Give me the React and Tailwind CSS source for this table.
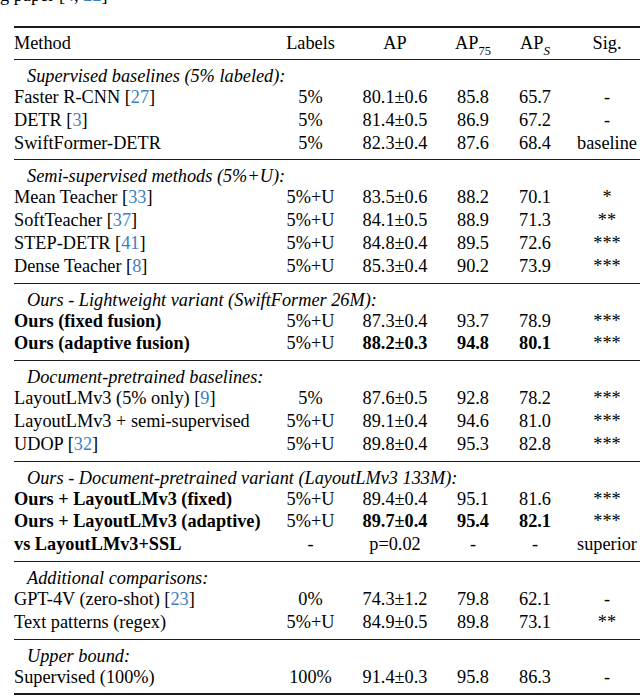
import React from "react";

const C = ({ n }) => (
  <>
    {" "}[<span className="text-[#3d7fc1]">{n}</span>]
  </>
);

const sections = [
  {
    label: "Supervised baselines (5% labeled):",
    rows: [
      { m: "Faster R-CNN", c: "27", l: "5%", ap: "80.1±0.6", a75: "85.8", as: "65.7", s: "-" },
      { m: "DETR", c: "3", l: "5%", ap: "81.4±0.5", a75: "86.9", as: "67.2", s: "-" },
      { m: "SwiftFormer-DETR", l: "5%", ap: "82.3±0.4", a75: "87.6", as: "68.4", s: "baseline" },
    ],
  },
  {
    label: "Semi-supervised methods (5%+U):",
    rows: [
      { m: "Mean Teacher", c: "33", l: "5%+U", ap: "83.5±0.6", a75: "88.2", as: "70.1", s: "*" },
      { m: "SoftTeacher", c: "37", l: "5%+U", ap: "84.1±0.5", a75: "88.9", as: "71.3", s: "**" },
      { m: "STEP-DETR", c: "41", l: "5%+U", ap: "84.8±0.4", a75: "89.5", as: "72.6", s: "***" },
      { m: "Dense Teacher", c: "8", l: "5%+U", ap: "85.3±0.4", a75: "90.2", as: "73.9", s: "***" },
    ],
  },
  {
    label: "Ours - Lightweight variant (SwiftFormer 26M):",
    rows: [
      { m: "Ours (fixed fusion)", mb: true, l: "5%+U", ap: "87.3±0.4", a75: "93.7", as: "78.9", s: "***" },
      { m: "Ours (adaptive fusion)", mb: true, l: "5%+U", ap: "88.2±0.3", a75: "94.8", as: "80.1", s: "***", vb: true },
    ],
  },
  {
    label: "Document-pretrained baselines:",
    rows: [
      { m: "LayoutLMv3 (5% only)", c: "9", l: "5%", ap: "87.6±0.5", a75: "92.8", as: "78.2", s: "***" },
      { m: "LayoutLMv3 + semi-supervised", l: "5%+U", ap: "89.1±0.4", a75: "94.6", as: "81.0", s: "***" },
      { m: "UDOP", c: "32", l: "5%+U", ap: "89.8±0.4", a75: "95.3", as: "82.8", s: "***" },
    ],
  },
  {
    label: "Ours - Document-pretrained variant (LayoutLMv3 133M):",
    rows: [
      { m: "Ours + LayoutLMv3 (fixed)", mb: true, l: "5%+U", ap: "89.4±0.4", a75: "95.1", as: "81.6", s: "***" },
      { m: "Ours + LayoutLMv3 (adaptive)", mb: true, l: "5%+U", ap: "89.7±0.4", a75: "95.4", as: "82.1", s: "***", vb: true },
      { m: "vs LayoutLMv3+SSL", mb: true, l: "-", ap: "p=0.02", a75: "-", as: "-", s: "superior" },
    ],
  },
  {
    label: "Additional comparisons:",
    rows: [
      { m: "GPT-4V (zero-shot)", c: "23", l: "0%", ap: "74.3±1.2", a75: "79.8", as: "62.1", s: "-" },
      { m: "Text patterns (regex)", l: "5%+U", ap: "84.9±0.5", a75: "89.8", as: "73.1", s: "**" },
    ],
  },
  {
    label: "Upper bound:",
    rows: [
      { m: "Supervised (100%)", l: "100%", ap: "91.4±0.3", a75: "95.8", as: "86.3", s: "-" },
    ],
  },
];

const grid = "grid grid-cols-[252px_89px_80px_76px_48px_96px] items-center";

export default function App() {
  return (
    <div className="w-[640px] h-[698px] overflow-hidden bg-white text-black font-['Liberation_Serif',serif] text-[18.3px]">
      <div className="h-[26px] overflow-hidden">
        <div className="mt-[-16px] leading-[22.8px] whitespace-nowrap">
          g paper [<span className="text-[#3d7fc1]">4</span>, <span className="text-[#3d7fc1]">22</span>]
        </div>
      </div>
      <div className="ml-[14px] w-[641px]">
        <div className="h-[2px] bg-[#1a1a1a]" />
        <div className={`${grid} h-[31px] leading-[22.8px] whitespace-nowrap`}>
          <div>Method</div>
          <div className="text-center">Labels</div>
          <div className="text-center">AP</div>
          <div className="text-center">
            AP<sub className="text-[12.5px] align-[-3px]">75</sub>
          </div>
          <div className="text-center">
            AP<sub className="text-[13px] italic align-[-3px]">S</sub>
          </div>
          <div className="text-center">Sig.</div>
        </div>
        {sections.map((sec, i) => (
          <div key={i}>
            <div className="h-px bg-[#1a1a1a]" />
            <div className="pt-[6px] pb-[5px] whitespace-nowrap">
              <div className="h-[20px] leading-[20px] italic pl-[13px]">{sec.label}</div>
              {sec.rows.map((r, j) => (
                <div key={j} className={`${grid} h-[22.8px] leading-[22.8px]`}>
                  <div className={r.mb ? "font-bold" : ""}>
                    {r.m}
                    {r.c && <C n={r.c} />}
                  </div>
                  <div className="text-center">{r.l}</div>
                  <div className={`text-center ${r.vb ? "font-bold" : ""}`}>{r.ap}</div>
                  <div className={`text-center ${r.vb ? "font-bold" : ""}`}>{r.a75}</div>
                  <div className={`text-center ${r.vb ? "font-bold" : ""}`}>{r.as}</div>
                  <div className="text-center">{r.s}</div>
                </div>
              ))}
            </div>
          </div>
        ))}
        <div className="h-[2px] bg-[#1a1a1a]" />
      </div>
    </div>
  );
}
